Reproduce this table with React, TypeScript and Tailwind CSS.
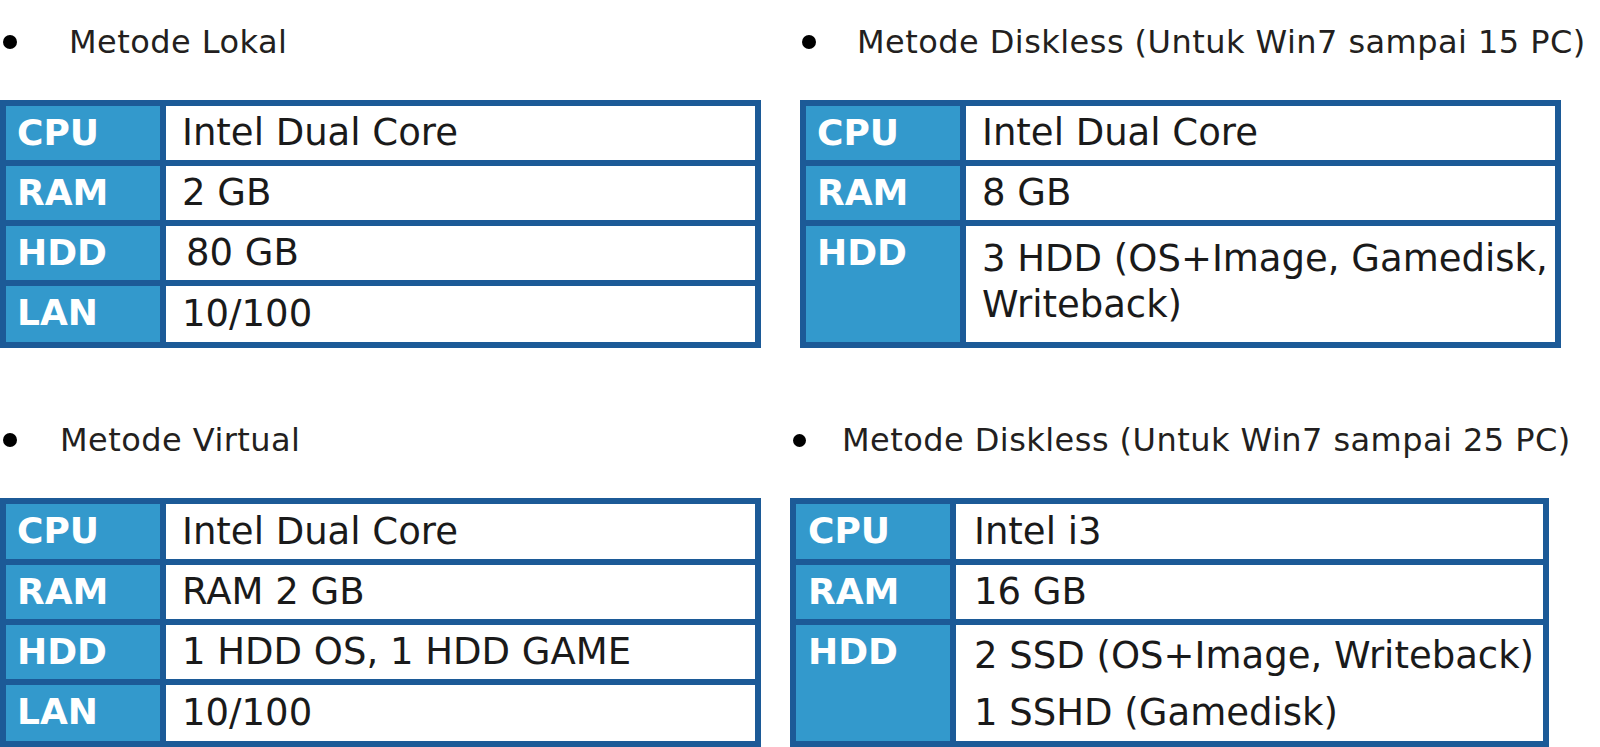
import React from "react";

type Row = {
  label: string;
  value: React.ReactNode;
  h: string;
  multi?: string;
};

const SpecTable = ({
  rows,
  className,
  labelPad,
  valuePad,
}: {
  rows: Row[];
  className: string;
  labelPad: string;
  valuePad: string;
}) => (
  <div
    className={`grid grid-cols-[154px_1fr] gap-[6px] bg-[#1c5a97] p-[6px] ${className}`}
  >
    {rows.map((r) => (
      <React.Fragment key={r.label}>
        <div
          className={`bg-[#3399cc] text-white font-bold text-[36px] leading-[54px] ${labelPad} ${r.h}`}
        >
          {r.label}
        </div>
        <div
          className={`bg-white text-[#1a1a1a] text-[37px] ${valuePad} ${r.h} ${
            r.multi ?? "flex items-center leading-[54px]"
          }`}
        >
          {r.value}
        </div>
      </React.Fragment>
    ))}
  </div>
);

const Bullet = ({ className }: { className: string }) => (
  <span className={`shrink-0 rounded-full bg-black ${className}`} />
);

const lokal: Row[] = [
  { label: "CPU", value: "Intel Dual Core", h: "h-[54px]" },
  { label: "RAM", value: "2 GB", h: "h-[54px]" },
  { label: "HDD", value: <span className="ml-[4px]">80 GB</span>, h: "h-[54px]" },
  { label: "LAN", value: "10/100", h: "h-[56px]" },
];

const diskless15: Row[] = [
  { label: "CPU", value: "Intel Dual Core", h: "h-[54px]" },
  { label: "RAM", value: "8 GB", h: "h-[54px]" },
  {
    label: "HDD",
    value: (
      <>
        3 HDD (OS+Image, Gamedisk,
        <br />
        Writeback)
      </>
    ),
    h: "h-[116px]",
    multi: "leading-[46px] pt-[10px]",
  },
];

const virtual: Row[] = [
  { label: "CPU", value: "Intel Dual Core", h: "h-[55px]" },
  { label: "RAM", value: "RAM 2 GB", h: "h-[54px]" },
  { label: "HDD", value: "1 HDD OS, 1 HDD GAME", h: "h-[54px]" },
  { label: "LAN", value: "10/100", h: "h-[56px]" },
];

const diskless25: Row[] = [
  { label: "CPU", value: "Intel i3", h: "h-[55px]" },
  { label: "RAM", value: "16 GB", h: "h-[54px]" },
  {
    label: "HDD",
    value: (
      <>
        <div>2 SSD (OS+Image, Writeback)</div>
        <div>1 SSHD (Gamedisk)</div>
      </>
    ),
    h: "h-[116px]",
    multi: "leading-[57px] pt-[2px]",
  },
];

const titleRow =
  "flex h-[40px] items-center text-[32px] leading-[40px] tracking-[0.45px] text-[#231f20]";

export default function App() {
  return (
    <div className="w-[1600px] h-[747px] overflow-hidden bg-white font-['DejaVu_Sans',sans-serif]">
      <div className="flex pt-[22px]">
        <div className="w-[761px]">
          <div className={titleRow}>
            <Bullet className="ml-[3px] h-[14px] w-[14px]" />
            <span className="ml-[52px]">Metode Lokal</span>
          </div>
          <SpecTable
            rows={lokal}
            className="mt-[38px] w-[761px]"
            labelPad="pl-[11px]"
            valuePad="pl-[16px]"
          />
        </div>
        <div className="ml-[39px]">
          <div className={titleRow}>
            <Bullet className="ml-[2px] h-[14px] w-[14px]" />
            <span className="ml-[41px] whitespace-nowrap">
              Metode Diskless (Untuk Win7 sampai 15 PC)
            </span>
          </div>
          <SpecTable
            rows={diskless15}
            className="mt-[38px] w-[761px]"
            labelPad="pl-[11px]"
            valuePad="pl-[16px]"
          />
        </div>
      </div>

      <div className="mt-[72px] flex">
        <div className="w-[761px]">
          <div className={titleRow}>
            <Bullet className="ml-[3px] h-[14px] w-[14px]" />
            <span className="ml-[43px]">Metode Virtual</span>
          </div>
          <SpecTable
            rows={virtual}
            className="mt-[38px] w-[761px]"
            labelPad="pl-[11px]"
            valuePad="pl-[16px]"
          />
        </div>
        <div className="ml-[29px]">
          <div className={titleRow}>
            <Bullet className="ml-[3px] h-[13px] w-[13px]" />
            <span className="ml-[36px] whitespace-nowrap">
              Metode Diskless (Untuk Win7 sampai 25 PC)
            </span>
          </div>
          <SpecTable
            rows={diskless25}
            className="mt-[38px] w-[759px]"
            labelPad="pl-[12px]"
            valuePad="pl-[18px]"
          />
        </div>
      </div>
    </div>
  );
}
